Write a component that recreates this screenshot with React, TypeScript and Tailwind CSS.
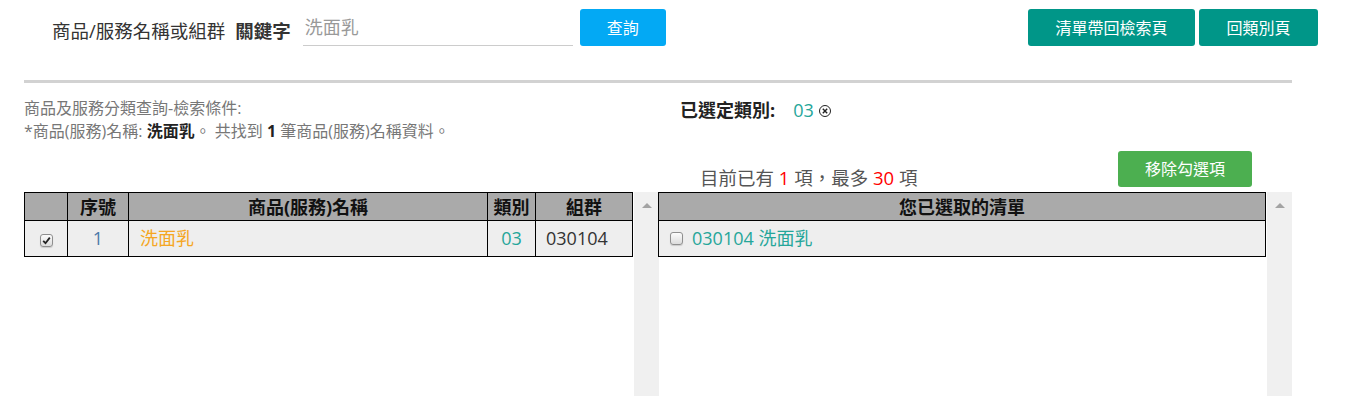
import React from "react";

const font = "font-['Open_Sans','Noto_Sans_CJK_TC',sans-serif]";

function FakeCheckbox({ checked }: { checked?: boolean }) {
  return (
    <span className="inline-flex items-center justify-center w-[13px] h-[13px] rounded-[3px] border border-[#8f8f8f] bg-gradient-to-b from-[#fcfcfc] to-[#dcdcdc] shadow-[0_1px_1px_rgba(0,0,0,0.15)]">
      {checked && (
        <svg width="9" height="9" viewBox="0 0 9 9">
          <path d="M1.2 4.8 L3.5 7.2 L7.8 1.6" fill="none" stroke="#222" strokeWidth="1.8" />
        </svg>
      )}
    </span>
  );
}

function ScrollTrack() {
  return (
    <div className="w-[25px] h-[300px] bg-[#f0f0f0] flex justify-center pt-[11px]">
      <span className="w-0 h-0 border-l-[5px] border-r-[5px] border-b-[5px] border-l-transparent border-r-transparent border-b-[#a3a3a3]" />
    </div>
  );
}

export default function App() {
  return (
    <div className={`w-[1351px] h-[396px] overflow-hidden bg-white text-[#333] ${font}`}>
      {/* 上方查詢列 */}
      <div className="flex items-start pt-[9px] pl-[52px] pr-[33px]">
        <div className="flex items-center h-[37px]">
          <span className="text-[18.5px] leading-[24px] pt-[7px]">商品/服務名稱或組群</span>
          <span className="ml-[10px] text-[18.5px] font-bold leading-[24px] pt-[7px]">關鍵字</span>
          <div className="ml-[12px] w-[270px] h-[36px] border-b border-[#ccc] flex items-center pl-[2px] pt-[1px] text-[18px] text-[#999]">
            洗面乳
          </div>
          <button className="ml-[7px] w-[86px] h-[37px] rounded-[3px] bg-[#03a9f4] text-white text-[16px]">
            查詢
          </button>
        </div>
        <div className="ml-auto flex gap-[4px]">
          <button className="w-[167px] h-[37px] rounded-[3px] bg-[#009688] text-white text-[16px]">
            清單帶回檢索頁
          </button>
          <button className="w-[119px] h-[37px] rounded-[3px] bg-[#009688] text-white text-[16px]">
            回類別頁
          </button>
        </div>
      </div>

      <div className="ml-[24px] w-[1268px]">
        <div className="mt-[34px] h-[3px] bg-[#d2d2d2]" />

        {/* 檢索條件 / 已選定類別 */}
        <div className="flex h-[109px]">
          <div className="w-[634px] pt-[14px] text-[16px] text-[#777]">
            <div className="leading-[22px]">商品及服務分類查詢-檢索條件:</div>
            <div className="leading-[24px]">
              *商品(服務)名稱: <b className="text-[#222]">洗面乳</b>。 共找到 <b className="text-[#222]">1</b> 筆商品(服務)名稱資料。
            </div>
          </div>
          <div className="w-[634px]">
            <div className="pl-[22px] pt-[15px] flex items-center leading-[24px] text-[18px]">
              <span className="font-bold text-[#222]">已選定類別:</span>
              <span className="ml-[18px] text-[#26a69a]">03</span>
              <span className="ml-[5px] mt-[2px] inline-flex items-center justify-center w-[12px] h-[12px] rounded-full border-[1.5px] border-[#222]">
                <svg width="6" height="6" viewBox="0 0 6 6">
                  <path d="M0.8 0.8 L5.2 5.2 M5.2 0.8 L0.8 5.2" stroke="#222" strokeWidth="1.4" />
                </svg>
              </span>
            </div>
            <div className="flex items-start pl-[42px] pr-[40px] mt-[29px]">
              <div className="mt-[15px] leading-[24px] text-[18.5px] text-[#555]">
                目前已有 <span className="text-[#f00]">1</span> 項，最多 <span className="text-[#f00]">30</span> 項
              </div>
              <button className="ml-auto w-[134px] h-[36px] rounded-[3px] bg-[#4caf50] text-white text-[16px]">
                移除勾選項
              </button>
            </div>
          </div>
        </div>

        {/* 清單 */}
        <div className="flex">
          <div className="flex w-[634px]">
            <table className="w-[608px] h-fit table-fixed border-collapse border border-black text-[18px] self-start">
              <colgroup>
                <col className="w-[43px]" />
                <col className="w-[61px]" />
                <col className="w-[359px]" />
                <col className="w-[48px]" />
                <col className="w-[97px]" />
              </colgroup>
              <thead>
                <tr className="bg-[#aaa] h-[28px] leading-[26px] text-[#111] font-bold">
                  <th className="border border-black"></th>
                  <th className="border border-black">序號</th>
                  <th className="border border-black">商品(服務)名稱</th>
                  <th className="border border-black">類別</th>
                  <th className="border border-black">組群</th>
                </tr>
              </thead>
              <tbody>
                <tr className="bg-[#eee] h-[36px]">
                  <td className="border border-black text-center">
                    <FakeCheckbox checked />
                  </td>
                  <td className="border border-black text-center text-[#4a78a8]">1</td>
                  <td className="border border-black pl-[11px] text-[#f5a623]">洗面乳</td>
                  <td className="border border-black text-center text-[#26a69a]">03</td>
                  <td className="border border-black pl-[10px] text-[#333]">030104</td>
                </tr>
              </tbody>
            </table>
            <div className="ml-[1px]">
              <ScrollTrack />
            </div>
          </div>
          <div className="flex w-[634px]">
            <table className="w-[608px] h-fit table-fixed border-collapse border border-black text-[18px] self-start">
              <thead>
                <tr className="bg-[#aaa] h-[28px] leading-[26px] text-[#111] font-bold">
                  <th className="border border-black">您已選取的清單</th>
                </tr>
              </thead>
              <tbody>
                <tr className="bg-[#eee] h-[36px]">
                  <td className="border border-black pl-[11px]">
                    <div className="flex items-center gap-[9px] text-[#26a69a]">
                      <FakeCheckbox />
                      <span>030104 洗面乳</span>
                    </div>
                  </td>
                </tr>
              </tbody>
            </table>
            <div className="ml-[1px]">
              <ScrollTrack />
            </div>
          </div>
        </div>
      </div>
    </div>
  );
}
